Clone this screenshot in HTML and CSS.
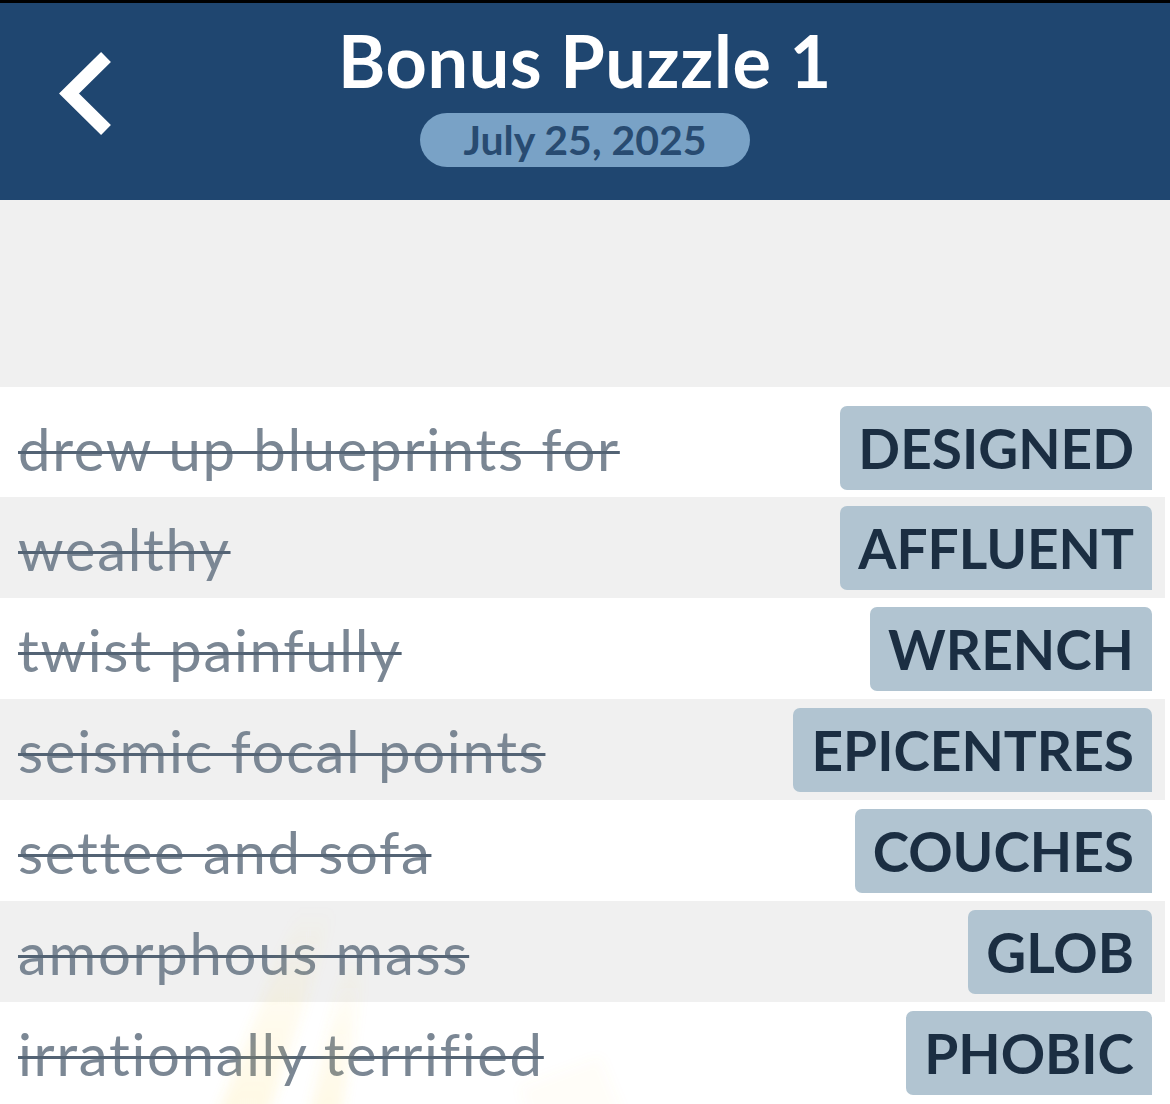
FILE: index.html
```html
<!DOCTYPE html>
<html>
<head>
<meta charset="utf-8">
<link rel="stylesheet" href="styles.css">
</head>
<body>
<div class="status"></div>
<header class="header">
  <button class="back" aria-label="Back">
    <svg width="60" height="90" viewBox="0 0 60 90"><path d="M54 9 L17 45.5 L54 82" fill="none" stroke="#fff" stroke-width="14" stroke-linejoin="miter"/></svg>
  </button>
  <div class="titles">
    <h1 class="title">Bonus Puzzle 1</h1>
    <div class="date">July 25, 2025</div>
  </div>
</header>
<div class="spacer"></div>
<main class="list">
  <div class="row first"><span class="clue">drew up blueprints for</span><span class="answer">DESIGNED</span></div>
  <div class="row alt"><span class="clue">wealthy</span><span class="answer">AFFLUENT</span></div>
  <div class="row"><span class="clue">twist painfully</span><span class="answer">WRENCH</span></div>
  <div class="row alt"><span class="clue">seismic focal points</span><span class="answer">EPICENTRES</span></div>
  <div class="row"><span class="clue">settee and sofa</span><span class="answer">COUCHES</span></div>
  <div class="row alt"><span class="clue">amorphous mass</span><span class="answer">GLOB</span></div>
  <div class="row"><span class="clue">irrationally terrified</span><span class="answer">PHOBIC</span></div>
  <svg class="watermark" width="800" height="260" viewBox="0 0 800 260">
    <defs>
      <filter id="soft" x="-20%" y="-20%" width="140%" height="140%"><feGaussianBlur stdDeviation="6"/></filter>
      <linearGradient id="fade" x1="0" y1="0" x2="0" y2="1">
        <stop offset="0" stop-color="#ffd34d" stop-opacity="0"/>
        <stop offset="0.45" stop-color="#ffd34d" stop-opacity="0.10"/>
        <stop offset="1" stop-color="#ffd34d" stop-opacity="0.16"/>
      </linearGradient>
    </defs>
    <g filter="url(#soft)">
      <polygon points="300,20 335,20 255,270 200,270" fill="url(#fade)"/>
      <polygon points="345,70 365,70 335,270 300,270" fill="url(#fade)"/>
      <polygon points="520,200 600,170 640,270 540,270" fill="#ffd34d" opacity="0.04"/>
    </g>
  </svg>
</main>
</body>
</html>
```
FILE: styles.css
```css
* { box-sizing: border-box; }
html, body {
  margin: 0;
  padding: 0;
  height: 1104px;
  overflow: hidden;
  background: #ffffff;
  font-family: Lato, "Open Sans", sans-serif;
}
.status {
  height: 3px;
  background: #000;
}
.header {
  position: relative;
  height: 197px;
  background: #1f4670;
  display: flex;
  justify-content: center;
}
.back {
  position: absolute;
  left: 52px;
  top: 45px;
  padding: 0;
  border: 0;
  background: none;
  display: block;
}
.back svg { display: block; }
.titles {
  display: flex;
  flex-direction: column;
  align-items: center;
  padding-top: 17px;
}
.title {
  margin: 0;
  color: #fff;
  font-size: 72px;
  font-weight: 700;
  line-height: 80px;
  letter-spacing: 0.6px;
}
.date {
  margin-top: 13px;
  width: 330px;
  height: 54px;
  border-radius: 27px;
  background: #79a2c6;
  color: #284b71;
  font-size: 41px;
  font-weight: 700;
  line-height: 54px;
  text-align: center;
}
.spacer {
  height: 187px;
  background: #f0f0f0;
}
.list {
  position: relative;
}
.watermark {
  position: absolute;
  left: 0;
  top: 500px;
  z-index: 2;
  pointer-events: none;
}
.row {
  position: relative;
  display: flex;
  align-items: center;
  justify-content: space-between;
  width: 1165px;
  height: 101px;
  padding: 9px 13px 8px 18px;
  background: #fff;
}
.row.first {
  height: 110px;
  padding-top: 19px;
  padding-bottom: 7px;
}
.row.alt { background: #f0f0f0; }
.clue {
  color: #7b8794;
  font-size: 58px;
  font-weight: 400;
  letter-spacing: 1.7px;
  text-decoration: line-through;
  text-decoration-color: #536374;
  text-decoration-thickness: 3px;
  margin-top: 0;
}
.answer {
  height: 84px;
  padding: 0 18px;
  border-radius: 7px 7px 0 7px;
  background: #b1c4d1;
  color: #1b2e42;
  font-size: 55px;
  font-weight: 700;
  line-height: 84px;
}
```
